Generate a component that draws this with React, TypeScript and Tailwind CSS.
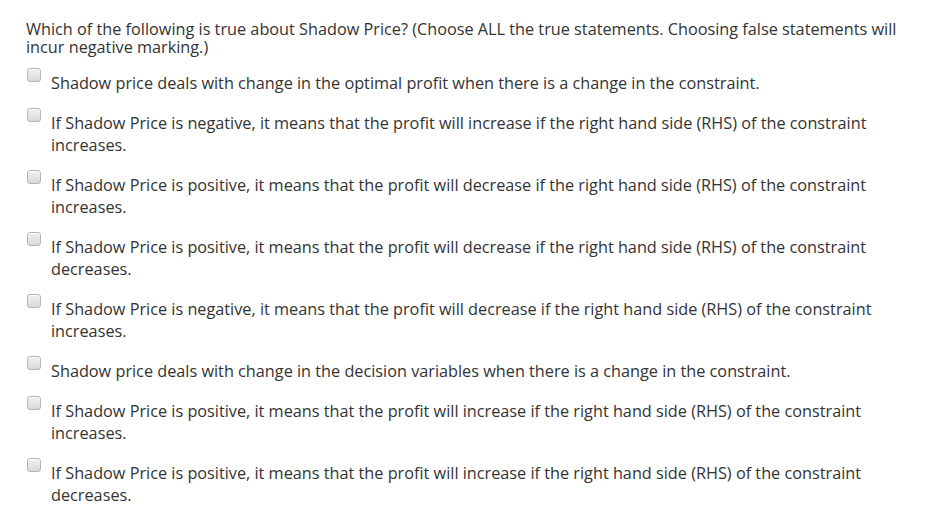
const options = [
  "Shadow price deals with change in the optimal profit when there is a change in the constraint.",
  "If Shadow Price is negative, it means that the profit will increase if the right hand side (RHS) of the constraint increases.",
  "If Shadow Price is positive, it means that the profit will decrease if the right hand side (RHS) of the constraint increases.",
  "If Shadow Price is positive, it means that the profit will decrease if the right hand side (RHS) of the constraint decreases.",
  "If Shadow Price is negative, it means that the profit will decrease if the right hand side (RHS) of the constraint increases.",
  "Shadow price deals with change in the decision variables when there is a change in the constraint.",
  "If Shadow Price is positive, it means that the profit will increase if the right hand side (RHS) of the constraint increases.",
  "If Shadow Price is positive, it means that the profit will increase if the right hand side (RHS) of the constraint decreases.",
];

export default function App() {
  return (
    <div className="min-h-screen bg-white pl-[26px] pr-[20px] pt-[20px] font-['Open_Sans',sans-serif] text-[#333333]">
      <p className="text-[16.25px] leading-[18px] w-[885px]">
        Which of the following is true about Shadow Price? (Choose ALL the true statements. Choosing false statements will
        incur negative marking.)
      </p>
      <ul className="mt-[16px] flex flex-col gap-[18px]">
        {options.map((text, i) => (
          <li key={i} className="flex items-start">
            <span className="mt-[-4px] ml-[1px] mr-[10px] h-[14px] w-[14px] shrink-0 rounded-[3px] border border-[#b4b4b4] bg-gradient-to-b from-[#f0f0f0] to-[#dadada] shadow-[inset_0_1px_0_#fff]"></span>
            <span className="text-[16.25px] leading-[22px] w-[845px]">{text}</span>
          </li>
        ))}
      </ul>
    </div>
  );
}
